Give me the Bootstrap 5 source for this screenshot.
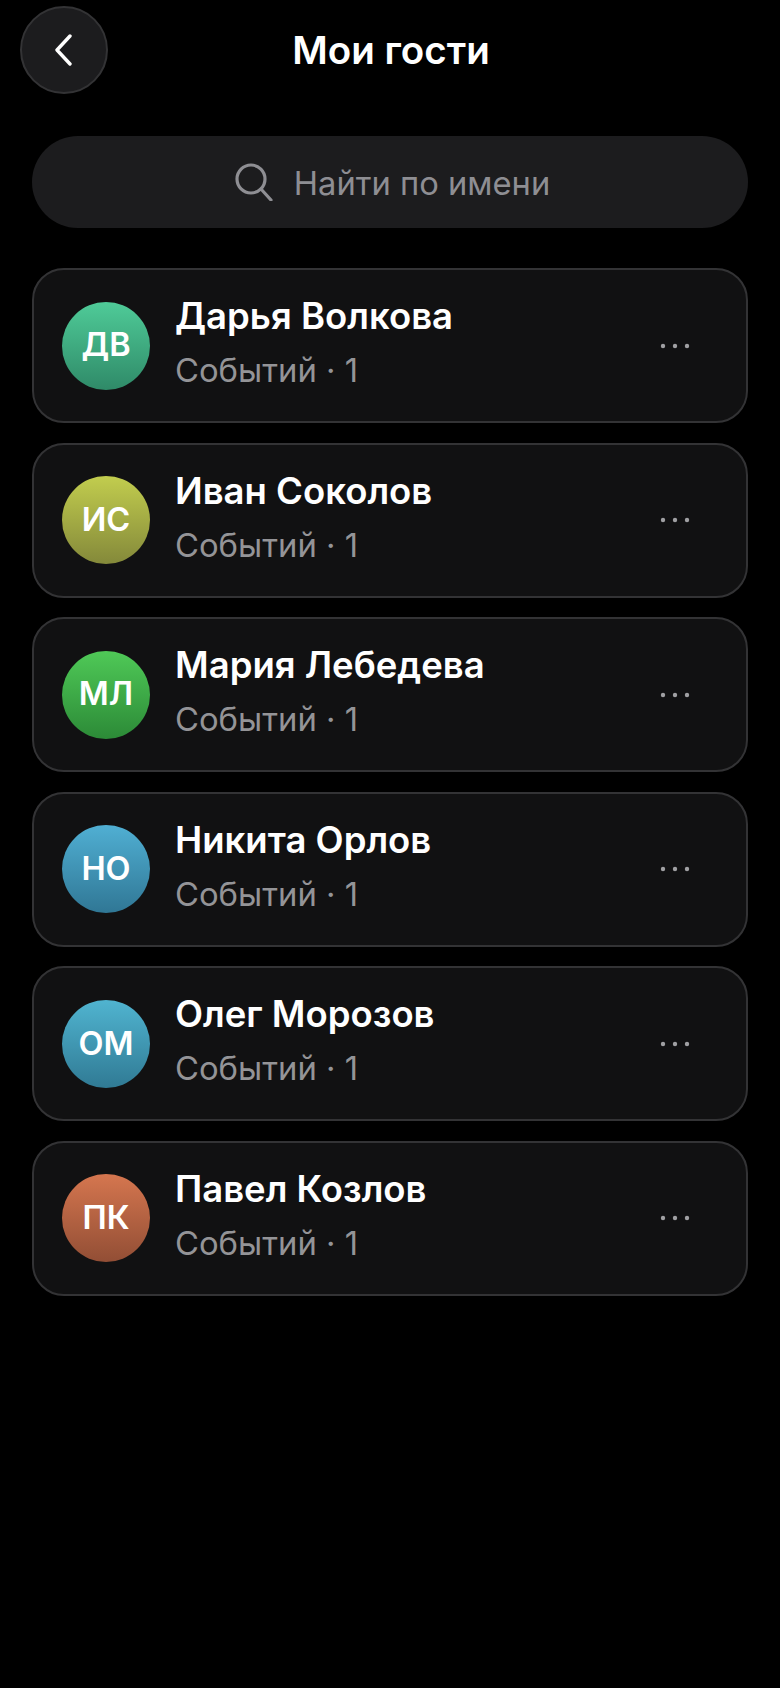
<!DOCTYPE html>
<html lang="ru">
<head>
    <meta charset="UTF-8">
    <meta name="viewport" content="width=device-width, initial-scale=1.0">
    <title>Мои гости</title>
    <link rel="stylesheet" href="https://cdn.jsdelivr.net/npm/bootstrap@5.3.0/dist/css/bootstrap.min.css">
    <style>
        body { background: #000; font-family: Inter, "Liberation Sans", sans-serif; }
        .page-wrap { padding: 6px 32px 0; }
        .top-bar { height: 88px; margin-left: -12px; position: relative; }
        .back-btn { width: 88px; height: 88px; background: #1c1c1e; border: 2px solid #333335; padding: 0; }
        .page-title { font-size: 38.5px; font-weight: 600; color: #fff; margin: 0; line-height: 84px; position: absolute; left: 2px; right: -12px; text-align: center; pointer-events: none; }
        .search-box { height: 92px; margin-top: 42px; padding-left: 5px; background: #1c1c1e; border-radius: 46px; gap: 21px; color: #8e8e93; font-size: 32.7px; }
        .search-box span { padding-top: 3px; }
        .guest-list { margin-top: 40px; gap: 19.6px; height: 1028px; }
        .guest-card { height: 155px; background: #111112; border: 2px solid #333335; border-radius: 32px; padding: 0 56px 0 28px; }
        .avatar { width: 88px; height: 88px; color: #fff; font-size: 32.5px; font-weight: 600; flex-shrink: 0; }
        .guest-info { margin-left: 25px; margin-top: -5px; }
        .guest-name { font-size: 36.5px; font-weight: 600; color: #fff; line-height: 44px; }
        .guest-sub { font-size: 32.8px; color: #949497; line-height: 44px; margin-top: 10px; }
        .av-green { background: linear-gradient(#4fcb98, #2f8a68); }
        .av-olive { background: linear-gradient(#c2cd4e, #84893a); }
        .av-lime { background: linear-gradient(#4fc957, #2c8a37); }
        .av-blue { background: linear-gradient(#50afd3, #307795); }
        .av-teal { background: linear-gradient(#50b4d0, #307a94); }
        .av-red { background: linear-gradient(#d5764f, #924e35); }
    </style>
</head>
<body>
    <div class="page-wrap">
        <div class="top-bar d-flex align-items-center">
            <h1 class="page-title">Мои гости</h1>
            <button class="back-btn rounded-circle d-flex align-items-center justify-content-center" type="button">
                <svg width="20" height="32" viewBox="0 0 20 32" fill="none" stroke="#fff" stroke-width="3.4" stroke-linecap="round" stroke-linejoin="round"><path d="M16 2 L3 16 L16 30"/></svg>
            </button>
        </div>

        <div class="search-box d-flex align-items-center justify-content-center">
            <svg width="38" height="38" viewBox="0 0 38 38" fill="none" stroke="#8e8e93" stroke-width="3.2" stroke-linecap="round"><circle cx="16" cy="16" r="14"/><path d="M26 26 L36 37"/></svg>
            <span>Найти по имени</span>
        </div>

        <div class="guest-list d-flex flex-column">
            <div class="guest-card d-flex align-items-center">
                <div class="avatar av-green rounded-circle d-flex align-items-center justify-content-center">ДВ</div>
                <div class="guest-info flex-grow-1">
                    <div class="guest-name">Дарья Волкова</div>
                    <div class="guest-sub">Событий · 1</div>
                </div>
                <svg width="30" height="6" viewBox="0 0 30 6" fill="#a0a0a3"><circle cx="3" cy="3" r="2.2"/><circle cx="15" cy="3" r="2.2"/><circle cx="27" cy="3" r="2.2"/></svg>
            </div>
            <div class="guest-card d-flex align-items-center">
                <div class="avatar av-olive rounded-circle d-flex align-items-center justify-content-center">ИС</div>
                <div class="guest-info flex-grow-1">
                    <div class="guest-name">Иван Соколов</div>
                    <div class="guest-sub">Событий · 1</div>
                </div>
                <svg width="30" height="6" viewBox="0 0 30 6" fill="#a0a0a3"><circle cx="3" cy="3" r="2.2"/><circle cx="15" cy="3" r="2.2"/><circle cx="27" cy="3" r="2.2"/></svg>
            </div>
            <div class="guest-card d-flex align-items-center">
                <div class="avatar av-lime rounded-circle d-flex align-items-center justify-content-center">МЛ</div>
                <div class="guest-info flex-grow-1">
                    <div class="guest-name">Мария Лебедева</div>
                    <div class="guest-sub">Событий · 1</div>
                </div>
                <svg width="30" height="6" viewBox="0 0 30 6" fill="#a0a0a3"><circle cx="3" cy="3" r="2.2"/><circle cx="15" cy="3" r="2.2"/><circle cx="27" cy="3" r="2.2"/></svg>
            </div>
            <div class="guest-card d-flex align-items-center">
                <div class="avatar av-blue rounded-circle d-flex align-items-center justify-content-center">НО</div>
                <div class="guest-info flex-grow-1">
                    <div class="guest-name">Никита Орлов</div>
                    <div class="guest-sub">Событий · 1</div>
                </div>
                <svg width="30" height="6" viewBox="0 0 30 6" fill="#a0a0a3"><circle cx="3" cy="3" r="2.2"/><circle cx="15" cy="3" r="2.2"/><circle cx="27" cy="3" r="2.2"/></svg>
            </div>
            <div class="guest-card d-flex align-items-center">
                <div class="avatar av-teal rounded-circle d-flex align-items-center justify-content-center">ОМ</div>
                <div class="guest-info flex-grow-1">
                    <div class="guest-name">Олег Морозов</div>
                    <div class="guest-sub">Событий · 1</div>
                </div>
                <svg width="30" height="6" viewBox="0 0 30 6" fill="#a0a0a3"><circle cx="3" cy="3" r="2.2"/><circle cx="15" cy="3" r="2.2"/><circle cx="27" cy="3" r="2.2"/></svg>
            </div>
            <div class="guest-card d-flex align-items-center">
                <div class="avatar av-red rounded-circle d-flex align-items-center justify-content-center">ПК</div>
                <div class="guest-info flex-grow-1">
                    <div class="guest-name">Павел Козлов</div>
                    <div class="guest-sub">Событий · 1</div>
                </div>
                <svg width="30" height="6" viewBox="0 0 30 6" fill="#a0a0a3"><circle cx="3" cy="3" r="2.2"/><circle cx="15" cy="3" r="2.2"/><circle cx="27" cy="3" r="2.2"/></svg>
            </div>
        </div>
    </div>

    <script src="https://cdn.jsdelivr.net/npm/bootstrap@5.3.0/dist/js/bootstrap.bundle.min.js"></script>
</body>
</html>
